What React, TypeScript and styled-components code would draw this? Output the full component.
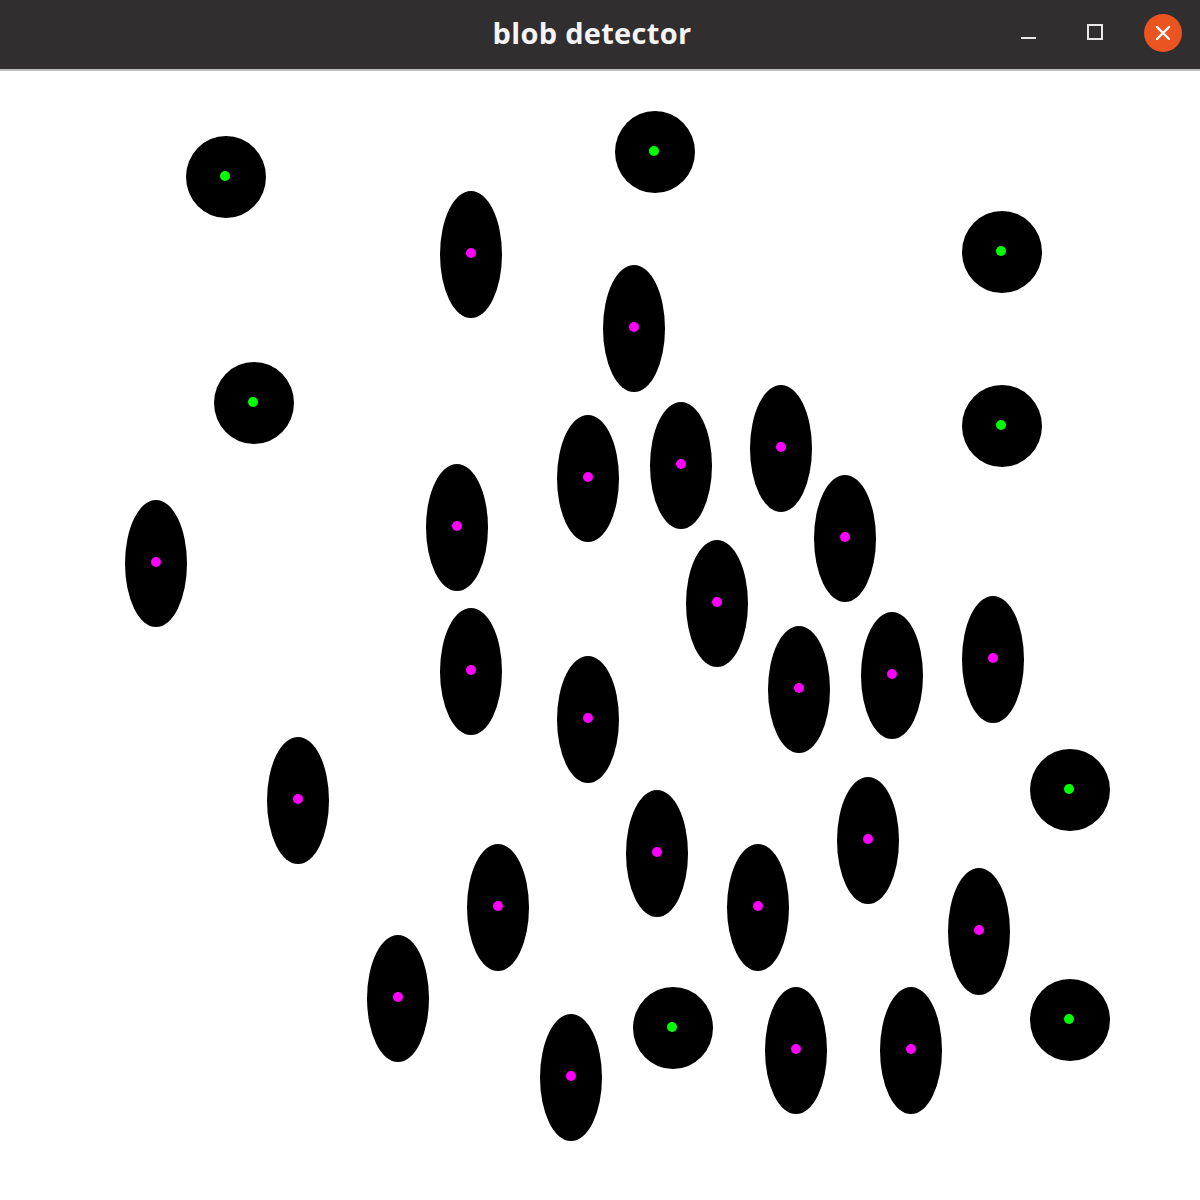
import React from "react";
import styled, { createGlobalStyle } from "styled-components";

const Global = createGlobalStyle`
  html, body { margin: 0; padding: 0; background: #ffffff; }
  body { width: 1200px; height: 1200px; overflow: hidden; }
`;

const Window = styled.div`
  width: 1200px;
  height: 1200px;
  display: flex;
  flex-direction: column;
  background: #ffffff;
`;

const TitleBar = styled.header`
  position: relative;
  height: 69px;
  flex: 0 0 69px;
  background: #302e2e;
  border-bottom: 2px solid #bdbdbd;
  display: flex;
  align-items: center;
  justify-content: center;
`;

const Title = styled.h1`
  margin: 0;
  margin-left: -16px;
  margin-top: -4px;
  font-family: "Open Sans", "DejaVu Sans", sans-serif;
  font-weight: 700;
  font-size: 29px;
  letter-spacing: 0.3px;
  color: #f4f4f4;
`;

const Controls = styled.div`
  position: absolute;
  right: 18px;
  top: 14px;
  display: flex;
  align-items: center;
  gap: 30px;
`;

const CtlButton = styled.div`
  width: 38px;
  height: 38px;
  display: flex;
  align-items: center;
  justify-content: center;
`;

const CloseButton = styled(CtlButton)`
  border-radius: 50%;
  background: #e95420;
`;

const Canvas = styled.main`
  position: relative;
  flex: 1;
  background: #ffffff;
`;

const Blob = styled.div<{ $round: boolean }>`
  position: absolute;
  width: ${(p) => (p.$round ? 80 : 62)}px;
  height: ${(p) => (p.$round ? 82 : 127)}px;
  margin-left: ${(p) => (p.$round ? -40 : -31)}px;
  margin-top: ${(p) => (p.$round ? -41 : -63)}px;
  border-radius: 50%;
  background: #000000;
`;

const Keypoint = styled.div<{ $round: boolean }>`
  position: absolute;
  width: 10px;
  height: 10px;
  margin-left: -5px;
  margin-top: -5px;
  border-radius: 50%;
  background: ${(p) => (p.$round ? "#00ff00" : "#ff00ff")};
`;

const OFFSET = 71;

const circles: [number, number][] = [
  [226, 177],
  [655, 152],
  [1002, 252],
  [254, 403],
  [1002, 426],
  [1070, 790],
  [673, 1028],
  [1070, 1020],
];

const ellipses: [number, number][] = [
  [471, 254],
  [634, 328],
  [588, 478],
  [681, 465],
  [781, 448],
  [457, 527],
  [156, 563],
  [845, 538],
  [717, 603],
  [471, 671],
  [588, 719],
  [799, 689],
  [892, 675],
  [993, 659],
  [298, 800],
  [657, 853],
  [868, 840],
  [498, 907],
  [758, 907],
  [979, 931],
  [398, 998],
  [571, 1077],
  [796, 1050],
  [911, 1050],
];

export default function App() {
  const blobs = [
    ...circles.map(([x, y]) => ({ x, y, round: true })),
    ...ellipses.map(([x, y]) => ({ x, y, round: false })),
  ];
  return (
    <>
      <Global />
      <Window>
        <TitleBar>
          <Title>blob detector</Title>
          <Controls>
            <CtlButton>
              <svg width="18" height="18" viewBox="0 0 18 18">
                <rect x="3" y="13" width="17" height="2" fill="#e8e8e8" />
              </svg>
            </CtlButton>
            <CtlButton>
              <svg width="18" height="18" viewBox="0 0 18 18">
                <rect x="2" y="1" width="14" height="14" fill="none" stroke="#e8e8e8" strokeWidth="2" />
              </svg>
            </CtlButton>
            <CloseButton>
              <svg width="16" height="16" viewBox="0 0 16 16">
                <path d="M2 2 L14 14 M14 2 L2 14" stroke="#ffffff" strokeWidth="2.4" strokeLinecap="round" />
              </svg>
            </CloseButton>
          </Controls>
        </TitleBar>
        <Canvas>
          {blobs.map((b, i) => (
            <React.Fragment key={i}>
              <Blob $round={b.round} style={{ left: b.x, top: b.y - OFFSET }} />
              <Keypoint
                $round={b.round}
                style={{ left: b.x - (b.round ? 1 : 0), top: b.y - OFFSET - 1 }}
              />
            </React.Fragment>
          ))}
        </Canvas>
      </Window>
    </>
  );
}
